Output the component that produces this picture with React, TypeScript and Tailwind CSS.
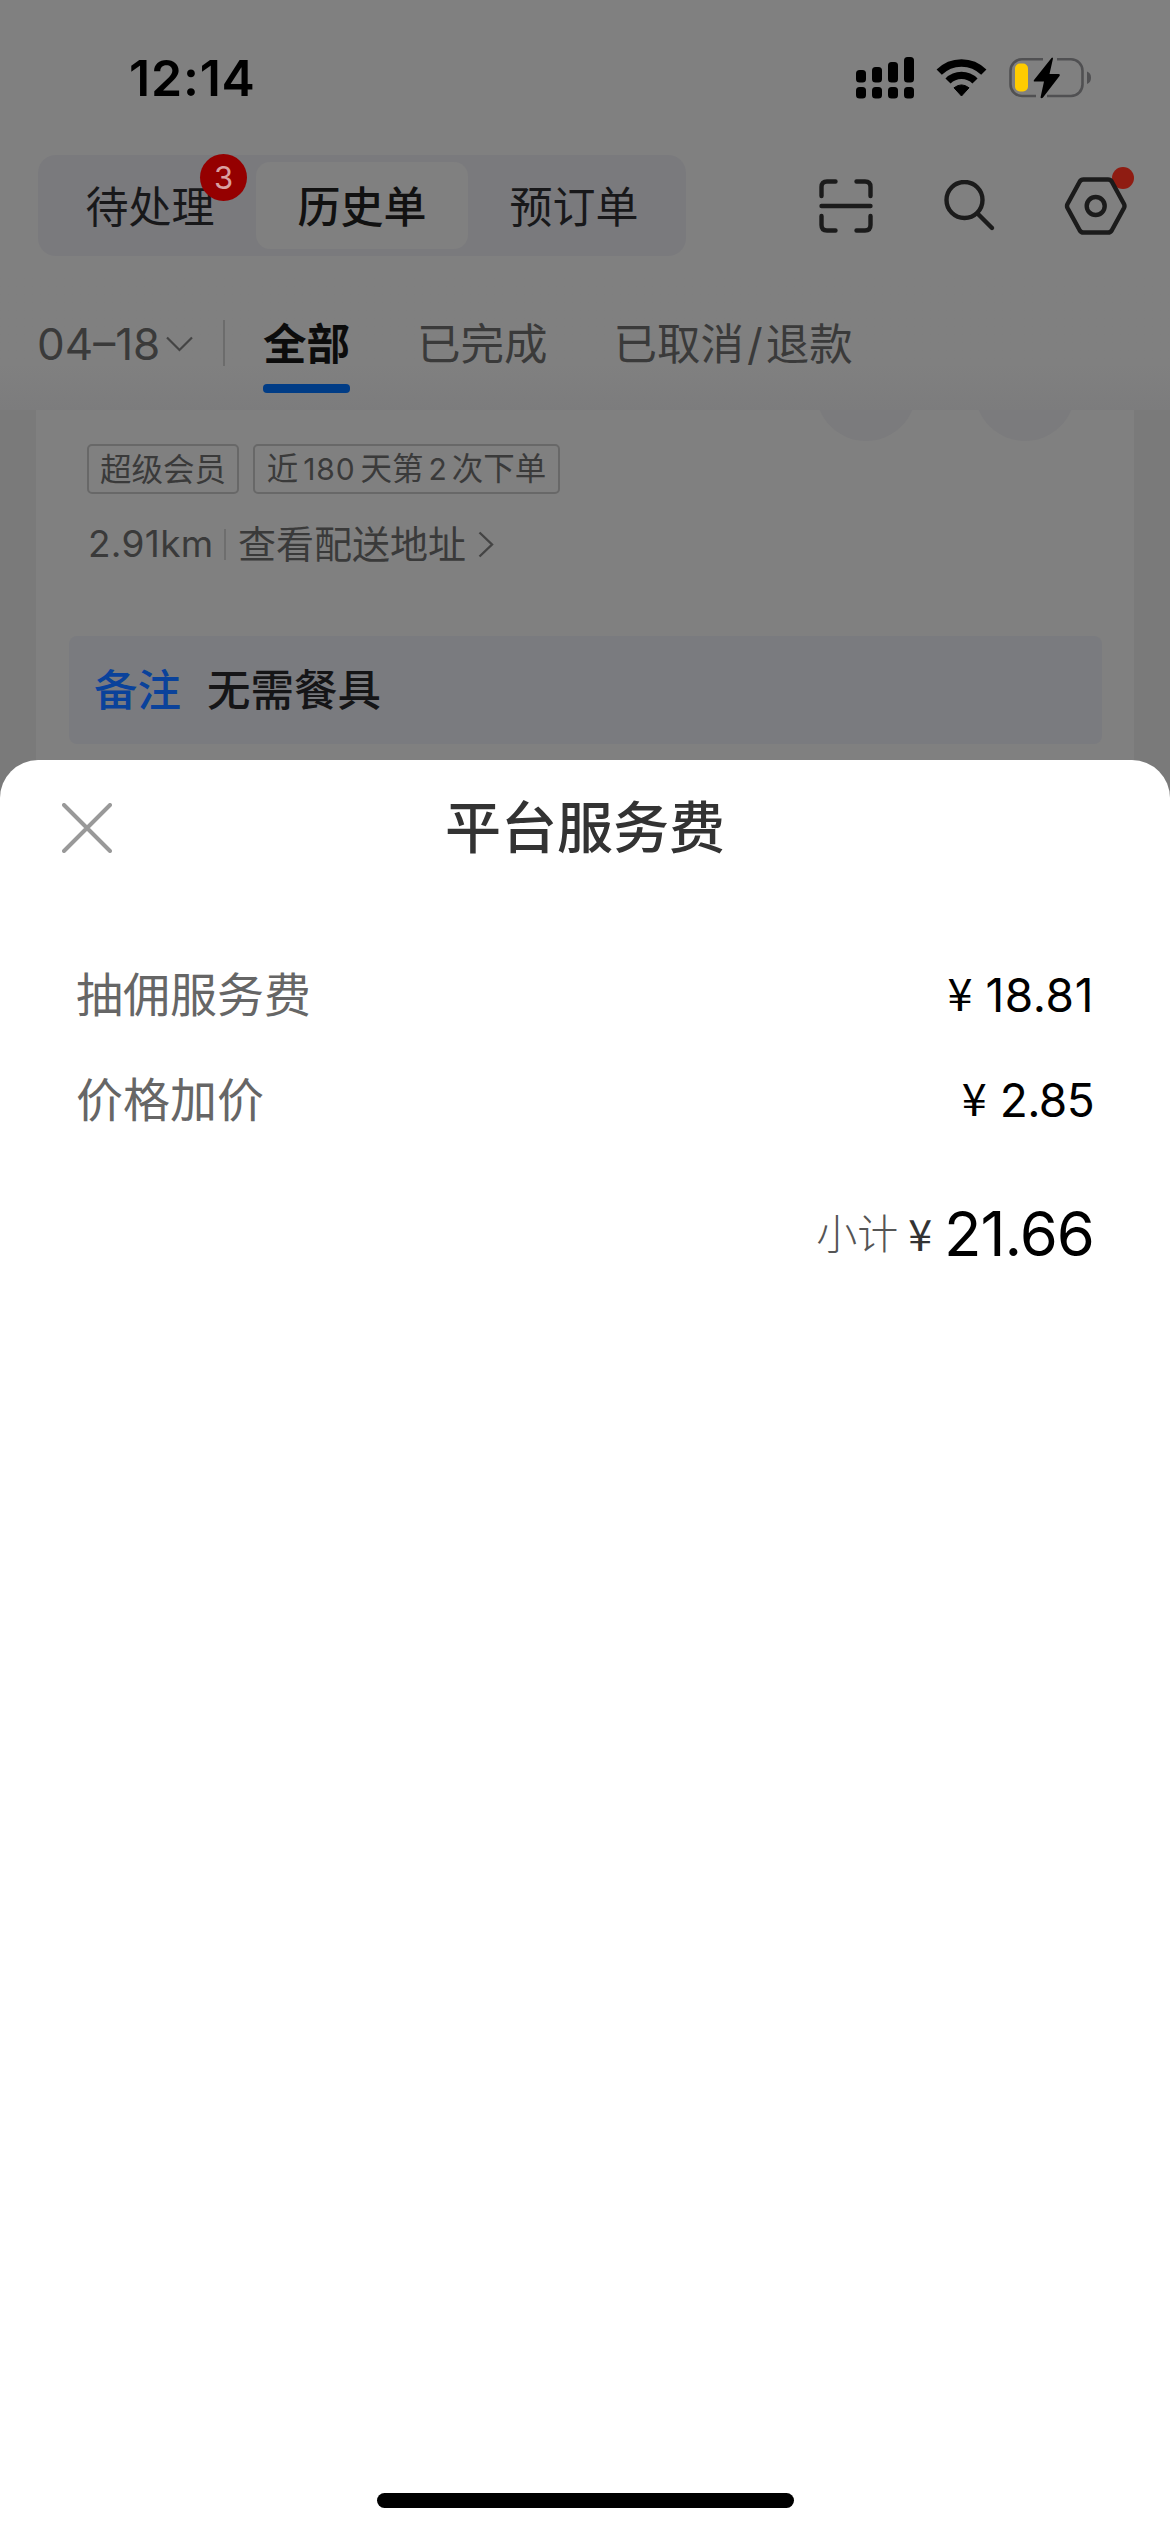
import React from "react";

function StatusBar() {
  return (
    <div className="flex h-[155px] items-start justify-between pl-[129px] pr-[78px] pt-[50px]">
      <span className="text-[50px] font-semibold leading-[56px] tracking-[0.8px] text-black">12:14</span>
      <div className="flex h-[56px] items-center">
        <svg width="58" height="42" viewBox="0 0 58 42" fill="#000" className="mr-[22px]">
          <rect x="0" y="13" width="10" height="12.5" rx="3.5" />
          <rect x="16" y="10" width="10" height="15.5" rx="3.5" />
          <rect x="32" y="5" width="10" height="20.5" rx="3.5" />
          <rect x="48" y="0" width="10" height="25.5" rx="3.5" />
          <rect x="0" y="30" width="10" height="11.5" rx="3.5" />
          <rect x="16" y="30" width="10" height="11.5" rx="3.5" />
          <rect x="32" y="30" width="10" height="11.5" rx="3.5" />
          <rect x="48" y="30" width="10" height="11.5" rx="3.5" />
        </svg>
        <svg width="51" height="38" viewBox="0 0 51 38" className="mr-[22px]">
          <path d="M3.2 13.2 A31.5 31.5 0 0 1 47.8 13.2" fill="none" stroke="#000" strokeWidth="7.4" />
          <path d="M12 22 A19 19 0 0 1 39 22" fill="none" stroke="#000" strokeWidth="7.2" />
          <path d="M18 28.8 Q25.5 23 33 28.8 L25.5 37 Z" fill="#000" stroke="#000" strokeWidth="1" strokeLinejoin="round" />
        </svg>
        <svg width="83" height="42" viewBox="0 0 83 42">
          <path d="M34 2.3 H13 A11.5 11.5 0 0 0 1.5 13.8 V27.5 A11.5 11.5 0 0 0 13 39 H27" fill="none" stroke="#505052" strokeWidth="2.6" />
          <path d="M48 2.3 H62 A11.5 11.5 0 0 1 73.5 13.8 V27.5 A11.5 11.5 0 0 1 62 39 H38" fill="none" stroke="#505052" strokeWidth="2.6" />
          <path d="M78 14.5 Q82 16 82 20.7 Q82 25.5 78 27 Z" fill="#505052" />
          <rect x="6" y="6.5" width="13" height="28" rx="5" fill="#ffcc00" />
          <path d="M42.5 1 L25 23 Q24 24.5 26 24.5 H35 L31.5 40.5 Q32.5 42 34 40.5 L50.5 19 Q51.5 17 49.5 17 H40.5 L44 1.5 Q43.5 0 42.5 1 Z" fill="#000" />
        </svg>
      </div>
    </div>
  );
}

function OrderTypeBar() {
  return (
    <div className="flex h-[101px] items-center pl-[38px] pr-[43px]">
      <div className="flex h-[101px] w-[648px] items-center rounded-[18px] bg-[#7a7a7d] p-[6px] text-[43px] leading-[60px] text-[#18181a]">
        <div className="relative flex flex-1 justify-center pt-[3px]">
          待处理
          <span className="absolute left-[156px] top-[-20px] flex h-[47px] w-[47px] items-center justify-center rounded-full bg-[#950000] text-[31px] leading-none text-[#d9a0a0]">
            3
          </span>
        </div>
        <div className="flex h-[87px] flex-1 items-center justify-center rounded-[14px] bg-[#808080] pt-[3px] font-medium text-[#111]">历史单</div>
        <div className="flex flex-1 justify-center pt-[3px]">预订单</div>
      </div>
      <div className="ml-auto flex items-center">
        <svg width="54" height="54" viewBox="0 0 54 54" fill="none" stroke="#1b1b1b" strokeWidth="4.4" strokeLinecap="round" className="mr-[71px]">
          <path d="M2.5 17 V8 Q2.5 2.5 8 2.5 H16.5" />
          <path d="M37.5 2.5 H46 Q51.5 2.5 51.5 8 V17" />
          <path d="M2.5 37 V46 Q2.5 51.5 8 51.5 H16.5" />
          <path d="M37.5 51.5 H46 Q51.5 51.5 51.5 46 V37" />
          <path d="M2.5 27 H51.5" />
        </svg>
        <svg width="52" height="52" viewBox="0 0 52 52" fill="none" stroke="#1b1b1b" strokeWidth="4.4" strokeLinecap="round" className="mr-[68px]">
          <circle cx="20.5" cy="20" r="18" />
          <path d="M33.5 33.5 L48 48" />
        </svg>
        <div className="relative">
          <span className="absolute right-[-7px] top-[-10px] h-[22px] w-[22px] rounded-full bg-[#8f1c12]" />
          <svg width="63" height="58" viewBox="0 0 63 58" fill="none" stroke="#1b1b1b" strokeWidth="4.4" strokeLinejoin="round" className="relative">
            <path d="M19.5 2.5 H44 Q46.5 2.5 47.7 4.5 L60 27 Q61 29 60 31 L47.7 53.5 Q46.5 55.5 44 55.5 H19.5 Q17 55.5 15.8 53.5 L3.5 31 Q2.5 29 3.5 27 L15.8 4.5 Q17 2.5 19.5 2.5 Z" />
            <circle cx="31.7" cy="29" r="9" />
          </svg>
        </div>
      </div>
    </div>
  );
}

function FilterTabs() {
  return (
    <div className="flex h-[154px] items-start bg-gradient-to-b from-[#808080] from-70% to-[#7c7c7d] pl-[37px] pt-[58px] text-[43.5px] leading-[60px] text-[#3a3a3a]">
      <div className="flex h-[60px] w-[186px] items-center whitespace-nowrap">
        <span className="w-[129px] text-[44px]">04–18</span>
        <svg width="27" height="16" viewBox="0 0 27 16" fill="none" stroke="#444" strokeWidth="2.2">
          <path d="M1 1.5 L13.5 14 L26 1.5" />
        </svg>
      </div>
      <div className="mt-[6px] h-[46px] w-[2px] bg-[#6c6c6c]" />
      <div className="ml-[38px] flex w-[87px] flex-col items-center">
        <span className="whitespace-nowrap font-bold text-[#0c0c0c]">全部</span>
        <span className="mt-[10px] h-[9px] w-[87px] rounded-[4px] bg-[#003c86]" />
      </div>
      <span className="ml-[67px] whitespace-nowrap">已完成</span>
      <span className="ml-[66px] whitespace-nowrap">
        已取消<span className="mx-[3px]">/</span>退款
      </span>
    </div>
  );
}

function OrderCard() {
  return (
    <div className="mx-[36px] h-[400px] overflow-hidden bg-[#808080] text-[#3a3a3a]">
      <div className="flex h-[34px] items-end justify-end gap-[59px] pb-[3px] pr-[59px]">
        <div className="h-[100px] w-[100px] rounded-full bg-[#7b7b7d]" />
        <div className="h-[100px] w-[100px] rounded-full bg-[#7b7b7d]" />
      </div>
      <div className="flex gap-[14px] pl-[51px] text-[31.5px] leading-[48px]">
        <span className="flex h-[50px] w-[152px] justify-center whitespace-nowrap rounded-[5px] border-2 border-[#686868]">超级会员</span>
        <span className="flex h-[50px] w-[307px] items-center justify-center gap-[5px] whitespace-nowrap rounded-[5px] border-2 border-[#686868]">
          <span>近</span>
          <span className="text-[30px] tracking-[0.8px]">180</span>
          <span>天第</span>
          <span className="text-[30px]">2</span>
          <span>次下单</span>
        </span>
      </div>
      <div className="mt-[24px] flex h-[52px] items-center whitespace-nowrap pl-[52px] text-[38px] leading-[52px]">
        <span className="w-[136px] text-[37px] tracking-[0.3px]">2.91km</span>
        <span className="h-[31px] w-[2px] bg-[#6e6e6e]" />
        <span className="ml-[12px]">查看配送地址</span>
        <svg width="16" height="27" viewBox="0 0 16 27" fill="none" stroke="#444" strokeWidth="2.4" className="ml-[12px]">
          <path d="M1.5 1.5 L14 13.5 L1.5 25.5" />
        </svg>
      </div>
      <div className="ml-[33px] mt-[66px] flex h-[108px] w-[1033px] items-center gap-[26px] rounded-[8px] bg-[#7a7b7f] pl-[25px] pt-[2px] text-[43.5px] font-medium">
        <span className="text-[#0a429b]">备注</span>
        <span className="text-[#151517]">无需餐具</span>
      </div>
    </div>
  );
}

function FeeRow({ label, amount, spacing }: { label: string; amount: string; spacing: string }) {
  return (
    <div className="flex h-[105px] items-center justify-between">
      <span className="text-[47px] text-[#666]">{label}</span>
      <span className="flex items-baseline text-[46px] text-black">
        <span className="relative top-[-1px] mr-[13px] font-['Noto_Sans_CJK_SC'] text-[45px] leading-none">¥</span>
        <span className={spacing}>{amount}</span>
      </span>
    </div>
  );
}

function FeeSheet() {
  return (
    <div className="absolute inset-x-0 bottom-0 top-[760px] flex flex-col rounded-t-[38px] bg-white">
      <div className="relative flex h-[134px] items-center justify-center pt-[2px] text-[56px] font-medium text-[#333]">
        <svg width="50" height="50" viewBox="0 0 50 50" stroke="#999" strokeWidth="4" strokeLinecap="round" className="absolute left-[62px] top-[43px]">
          <path d="M2 2 L48 48 M48 2 L2 48" />
        </svg>
        平台服务费
      </div>
      <div className="pl-[76px] pr-[76px] pt-[49px]">
        <FeeRow label="抽佣服务费" amount="18.81" spacing="tracking-[0.6px]" />
        <FeeRow label="价格加价" amount="2.85" spacing="tracking-[-0.6px]" />
        <div className="mt-[26px] flex h-[110px] items-center justify-end">
          <span className="pt-[2px] text-[41px] font-light text-[#555]">小计</span>
          <span className="ml-[10px] pb-[3px] font-['Noto_Sans_CJK_SC'] text-[43px] leading-none text-[#333]">¥</span>
          <span className="ml-[12px] text-[61.5px] tracking-[-1px] text-black">21.66</span>
        </div>
      </div>
      <div className="mx-auto mb-[24px] mt-auto h-[15px] w-[417px] rounded-full bg-black" />
    </div>
  );
}

export default function App() {
  return (
    <div className="relative h-[2532px] w-[1170px] overflow-hidden bg-[#7a7a7a] font-['Inter','Noto_Sans_CJK_SC',sans-serif]">
      <div className="bg-[#808080]">
        <StatusBar />
        <OrderTypeBar />
      </div>
      <FilterTabs />
      <OrderCard />
      <FeeSheet />
    </div>
  );
}
